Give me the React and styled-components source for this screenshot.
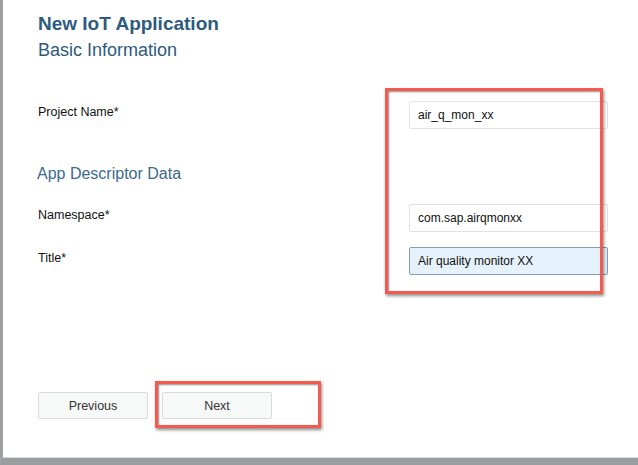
import React from "react";
import styled, {createGlobalStyle} from "styled-components";

const GlobalStyle = createGlobalStyle`
    html, body {
        margin: 0;
        padding: 0;
        background: #ffffff;
    }
    body {
        font-family: "Liberation Sans", Arial, Helvetica, sans-serif;
    }
`;

function App() {
    return (
        <StyledScreen>
            <GlobalStyle/>
            <StyledPage>
                <StyledHeader>
                    <StyledTitle>New IoT Application</StyledTitle>
                    <StyledSubtitle>Basic Information</StyledSubtitle>
                </StyledHeader>

                <StyledRow $top={40}>
                    <StyledLabel>Project Name*</StyledLabel>
                    <StyledInput type="text" defaultValue="air_q_mon_xx"/>
                </StyledRow>

                <StyledSection>App Descriptor Data</StyledSection>

                <StyledRow $top={20}>
                    <StyledLabel>Namespace*</StyledLabel>
                    <StyledInput type="text" defaultValue="com.sap.airqmonxx"/>
                </StyledRow>
                <StyledRow $top={15}>
                    <StyledLabel>Title*</StyledLabel>
                    <StyledInput type="text" defaultValue="Air quality monitor XX" $focused/>
                </StyledRow>

                <StyledFooter>
                    <StyledButton type="button">Previous</StyledButton>
                    <StyledButton type="button">Next</StyledButton>
                </StyledFooter>
            </StyledPage>

            <StyledHighlight $left={385} $top={88} $width={218} $height={206}/>
            <StyledHighlight $left={155} $top={381} $width={166} $height={47}/>
        </StyledScreen>
    )
}

const StyledScreen = styled.div`
    position: relative;
    width: 638px;
    height: 465px;
    overflow: hidden;
`;

const StyledPage = styled.div`
    box-sizing: border-box;
    display: flex;
    flex-direction: column;
    width: 638px;
    height: 465px;
    padding: 12px 0 0 35px;
    border-left: 3px solid #a0a1a2;
    border-bottom: 7px solid #9b9c9d;
    box-shadow: inset 0 -1px 0 #dcdcdc;
`;

const StyledHeader = styled.div`
    display: flex;
    flex-direction: column;
`;

const StyledTitle = styled.h1`
    margin: 0;
    font-size: 19px;
    line-height: 24px;
    font-weight: bold;
    color: #2c5a80;
`;

const StyledSubtitle = styled.h2`
    margin: 3px 0 0;
    font-size: 18px;
    line-height: 22px;
    font-weight: normal;
    color: #2c5a80;
`;

const StyledSection = styled.h3`
    margin: 35px 0 0 -1px;
    font-size: 16px;
    line-height: 20px;
    font-weight: normal;
    color: #3b6a90;
`;

const StyledRow = styled.div`
    display: grid;
    grid-template-columns: 371px 199px;
    align-items: start;
    margin-top: ${props => props.$top}px;
`;

const StyledLabel = styled.label`
    padding-top: 3px;
    font-size: 12.5px;
    line-height: 16px;
    color: #111111;
`;

const StyledInput = styled.input`
    box-sizing: border-box;
    width: 199px;
    height: 28px;
    margin: 0;
    padding: 0 8px;
    font-family: "Liberation Sans", Arial, sans-serif;
    font-size: 12px;
    color: #111111;
    border: 1px solid ${props => props.$focused ? "#7f9db7" : "#e2e2e2"};
    border-radius: 2px;
    background: ${props => props.$focused ? "#e6f2fb" : "#ffffff"};
    outline: none;
`;

const StyledFooter = styled.div`
    display: flex;
    gap: 14px;
    margin-top: auto;
    margin-bottom: 39px;
`;

const StyledButton = styled.button`
    box-sizing: border-box;
    width: 110px;
    height: 27px;
    padding: 0;
    font-family: "Liberation Sans", Arial, sans-serif;
    font-size: 12.5px;
    color: #333333;
    background: #f7f8f8;
    border: 1px solid #dadada;
    border-radius: 2px;
`;

const StyledHighlight = styled.div`
    position: absolute;
    box-sizing: border-box;
    left: ${props => props.$left}px;
    top: ${props => props.$top}px;
    width: ${props => props.$width}px;
    height: ${props => props.$height}px;
    border: 3px solid #f45a4e;
    box-shadow: inset 1px 1px 2px rgba(0, 0, 0, 0.45), 1px 2px 3px rgba(0, 0, 0, 0.45);
    pointer-events: none;
`;

export default App
